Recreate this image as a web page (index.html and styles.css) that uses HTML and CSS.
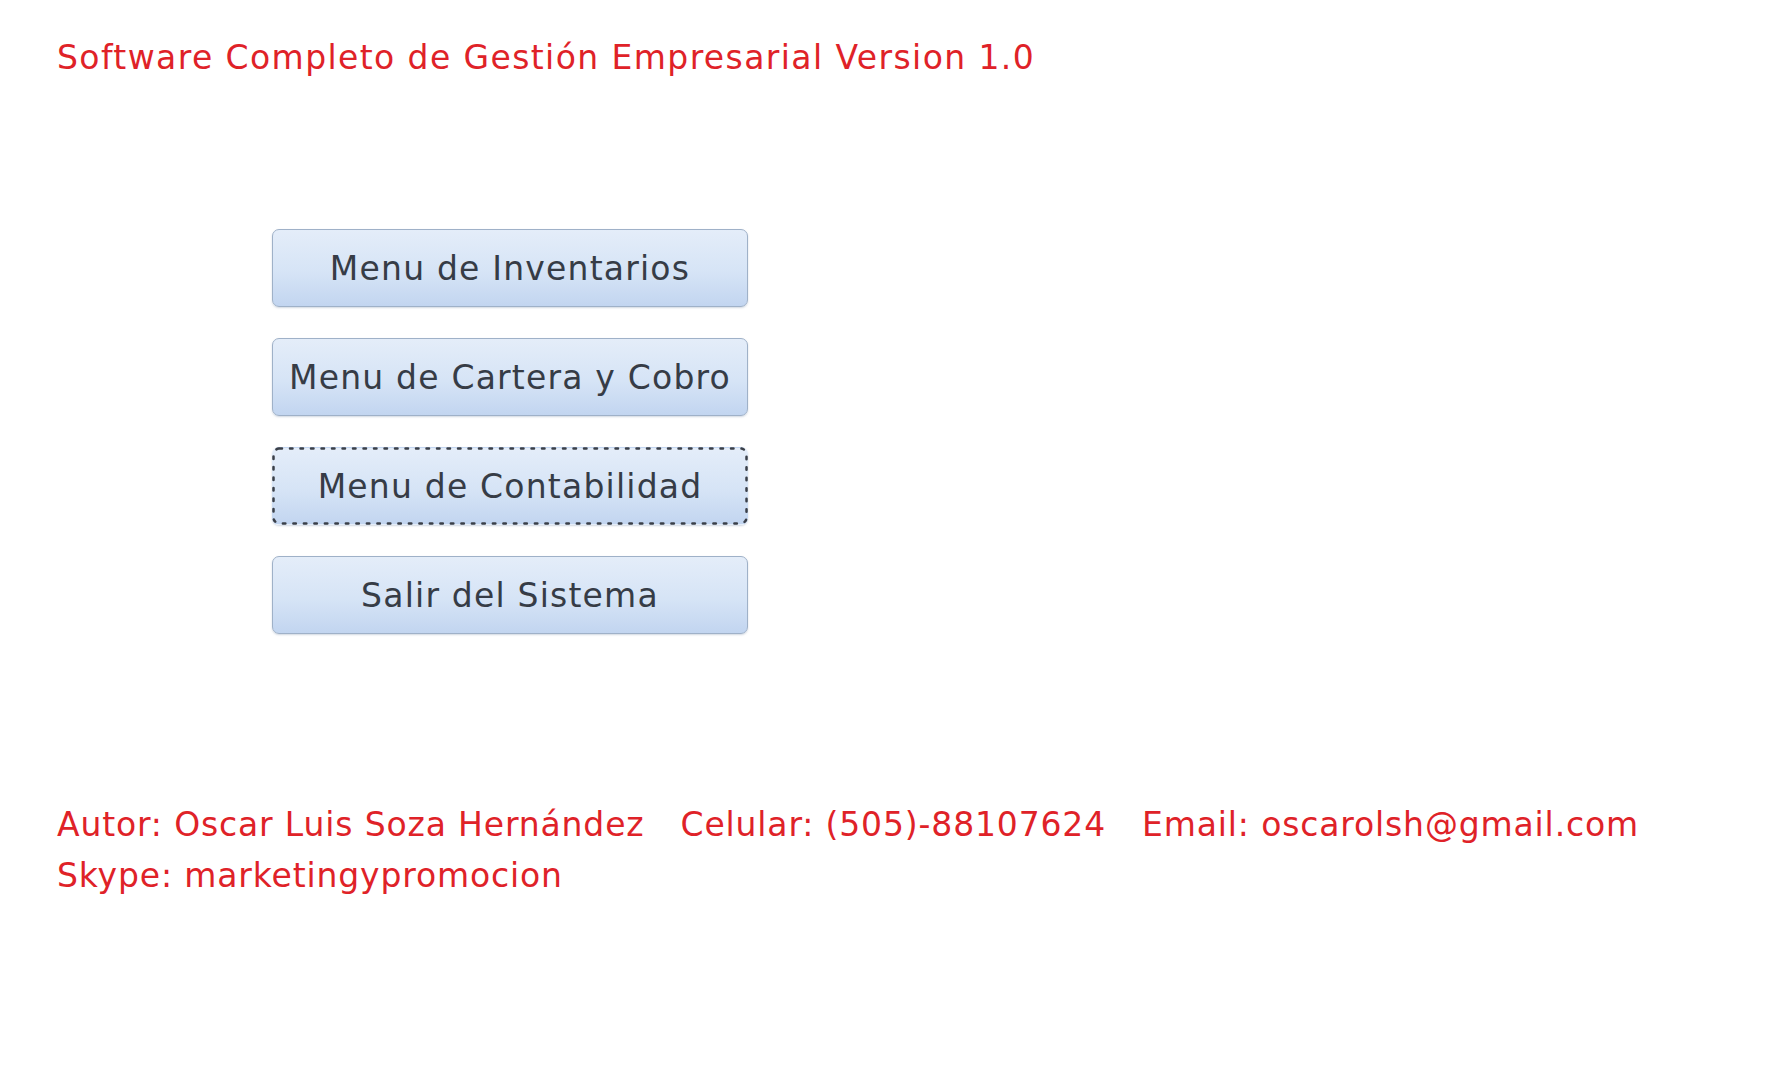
FILE: index.html
```html
<!DOCTYPE html>
<html lang="es">
<head>
    <meta charset="UTF-8">
    <title>Software Completo de Gestión Empresarial</title>
    <link rel="stylesheet" href="styles.css">
</head>
<body>
    <div class="pantalla">
        <h1 class="titulo">Software Completo de Gestión Empresarial Version 1.0</h1>

        <div class="menu">
            <button class="boton">Menu de Inventarios</button>
            <button class="boton">Menu de Cartera y Cobro</button>
            <button class="boton activo">
                Menu de Contabilidad
                <svg class="foco" viewBox="0 0 476 78" preserveAspectRatio="none">
                    <rect x="1.5" y="1.5" width="473" height="75" rx="6" ry="6" />
                </svg>
            </button>
            <button class="boton">Salir del Sistema</button>
        </div>

        <div class="pie">
            <p>Autor: Oscar Luis Soza Hernández<span class="sep"></span>Celular: (505)-88107624<span class="sep"></span>Email: oscarolsh@gmail.com</p>
            <p>Skype: marketingypromocion</p>
        </div>
    </div>
</body>
</html>
```

FILE: styles.css
```css
body {
    margin: 0;
    background-color: #fff;
    font-family: 'DejaVu Sans', 'Open Sans', sans-serif;
}
.pantalla {
    padding: 0 57px;
}
.titulo {
    margin: 0;
    padding-top: 36px;
    font-size: 33px;
    font-weight: normal;
    line-height: 44px;
    letter-spacing: 1.4px;
    color: #df2228;
}
.menu {
    display: flex;
    flex-direction: column;
    gap: 31px;
    width: 476px;
    margin: 149px 0 0 215px;
}
.boton {
    position: relative;
    height: 78px;
    padding: 0;
    font-family: inherit;
    font-size: 33px;
    letter-spacing: 1.2px;
    color: #363c46;
    border: 1px solid #9fb1c8;
    border-radius: 7px;
    background: linear-gradient(to bottom, #e4edf9 0%, #d6e4f6 55%, #c2d5f0 100%);
    box-shadow: 0 1px 2px rgba(120, 140, 170, 0.35);
    cursor: pointer;
}
.boton.activo {
    border-color: transparent;
}
/* borde punteado del boton con foco */
.foco {
    position: absolute;
    top: -1px;
    left: -1px;
    width: calc(100% + 2px);
    height: calc(100% + 2px);
    pointer-events: none;
}
.foco rect {
    fill: none;
    stroke: #3a3f48;
    stroke-width: 2.5;
    stroke-dasharray: 2.5 8;
    stroke-linecap: round;
}
.pie {
    margin-top: 165px;
    color: #df2228;
    font-size: 33px;
    letter-spacing: 0.85px;
    line-height: 51px;
}
.pie p {
    margin: 0;
}
.sep {
    display: inline-block;
    width: 36px;
}
```
